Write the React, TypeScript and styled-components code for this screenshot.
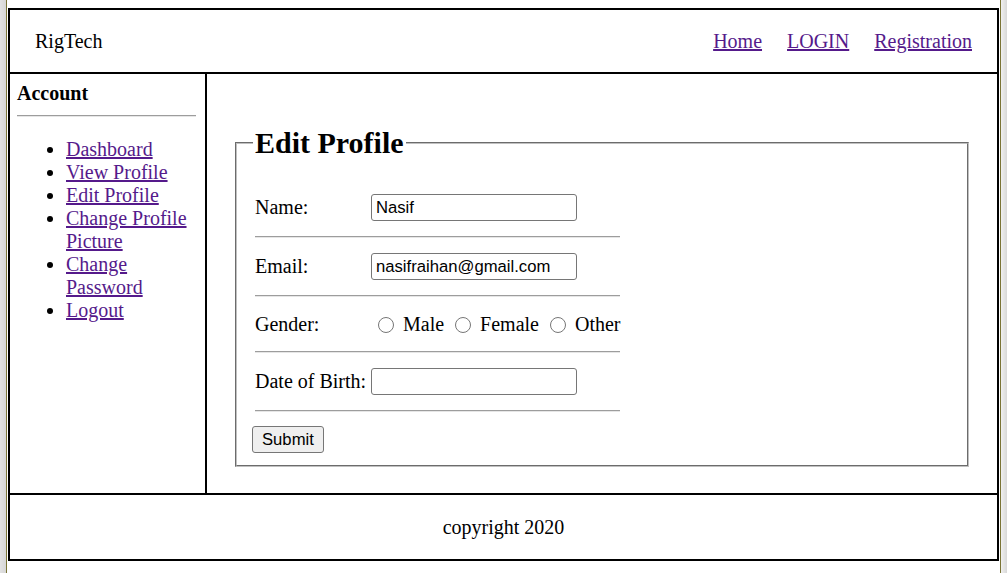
import styled, { createGlobalStyle } from 'styled-components';

const GlobalStyle = createGlobalStyle`
  html {
    min-height: 100%;
    background: linear-gradient(
      to right,
      #e2e2e2 0,
      #d6d6d6 6px,
      #7a7436 6px,
      #7a7436 7px,
      #ffffff 7px,
      #ffffff 1000px,
      #7a7436 1000px,
      #7a7436 1001px,
      #f0f0f0 1001px,
      #d8d8d8 100%
    );
  }
  body {
    margin: 8px;
    font-family: "Liberation Serif", "Times New Roman", serif;
    font-size: 20px;
    color: #000;
    background: transparent;
  }
`;

const Page = styled.div`
  border: 2px solid #000;
  background: #fff;
`;

const Header = styled.header`
  display: flex;
  align-items: center;
  justify-content: space-between;
  height: 62px;
  padding: 0 25px;
  border-bottom: 2px solid #000;
`;

const Brand = styled.div`
  font-size: 20px;
`;

const Nav = styled.nav`
  display: flex;
  gap: 25px;
`;

const Link = styled.a`
  color: #551a8b;
  text-decoration: underline;
  cursor: pointer;
`;

const Body = styled.div`
  display: flex;
`;

const Sidebar = styled.aside`
  width: 197px;
  box-sizing: border-box;
  padding: 0 9px 0 7px;
  border-right: 2px solid #000;
`;

const SideTitle = styled.h4`
  margin: 8px 0 0;
  font-size: 20px;
  font-weight: bold;
`;

const Rule = styled.hr<{ $top?: number; $bottom?: number }>`
  height: 0;
  margin: ${(p) => p.$top ?? 10}px 0 ${(p) => p.$bottom ?? 10}px;
  border: 0;
  border-top: 1px solid #9d9d9d;
  border-bottom: 1px solid #e6e6e6;
`;

const Menu = styled.ul`
  margin: 21px 0 0;
  padding-left: 49px;
  list-style: disc;
`;

const Main = styled.main`
  flex: 1;
  padding: 52px 28px 26px;
`;

const Fieldset = styled.fieldset`
  margin: 0;
  padding: 7px 15px 12px;
  border: 2px groove #c0c0c0;
`;

const Legend = styled.legend`
  margin-left: 1px;
  padding: 0 2px;
  font-size: 30px;
  font-weight: bold;
`;

const FormRows = styled.div`
  width: 365px;
  margin: 27px 0 0 3px;
`;

const Row = styled.div<{ $h?: number }>`
  display: flex;
  align-items: center;
  height: ${(p) => p.$h ?? 27}px;
`;

const Label = styled.label`
  width: 116px;
  flex: none;
  white-space: nowrap;
`;

const TextInput = styled.input`
  width: 206px;
  height: 27px;
  box-sizing: border-box;
  padding: 1px 4px;
  border: 1px solid #767676;
  border-radius: 3px;
  font-family: "Liberation Sans", Arial, sans-serif;
  font-size: 16.67px;
  color: #000;
  background: #fff;
`;

const Choice = styled.label`
  display: inline-flex;
  align-items: center;
  white-space: nowrap;
  margin-right: 4px;

  &:last-child {
    margin-right: 0;
  }
`;

const Radio = styled.input`
  width: 16px;
  height: 16px;
  margin: 1px 4px 0 7px;
  padding: 0;
  accent-color: #767676;
`;

const ChoiceText = styled.span`
  margin-left: 5px;
`;

const SubmitButton = styled.button`
  height: 27px;
  padding: 0 9px;
  margin-top: 14px;
  border: 1px solid #767676;
  border-radius: 3px;
  background: #efefef;
  font-family: "Liberation Sans", Arial, sans-serif;
  font-size: 16.67px;
  color: #000;
`;

const Footer = styled.footer`
  display: flex;
  align-items: center;
  justify-content: center;
  height: 64px;
  border-top: 2px solid #000;
`;

const menu = [
  'Dashboard',
  'View Profile',
  'Edit Profile',
  'Change Profile Picture',
  'Change Password',
  'Logout',
];

export default function App() {
  return (
    <>
      <GlobalStyle />
      <Page>
        <Header>
          <Brand>RigTech</Brand>
          <Nav>
            <Link>Home</Link>
            <Link>LOGIN</Link>
            <Link>Registration</Link>
          </Nav>
        </Header>
        <Body>
          <Sidebar>
            <SideTitle>Account</SideTitle>
            <Rule />
            <Menu>
              {menu.map((m) => (
                <li key={m}>
                  <Link>{m}</Link>
                </li>
              ))}
            </Menu>
          </Sidebar>
          <Main>
            <form onSubmit={(e) => e.preventDefault()}>
              <Fieldset>
                <Legend>Edit Profile</Legend>
                <FormRows>
                  <Row>
                    <Label>Name:</Label>
                    <TextInput defaultValue="Nasif" />
                  </Row>
                  <Rule $top={15} $bottom={15} />
                  <Row>
                    <Label>Email:</Label>
                    <TextInput defaultValue="nasifraihan@gmail.com" />
                  </Row>
                  <Rule $top={15} $bottom={15} />
                  <Row $h={25}>
                    <Label>Gender:</Label>
                    <Choice>
                      <Radio type="radio" name="gender" />
                      <ChoiceText>Male</ChoiceText>
                    </Choice>
                    <Choice>
                      <Radio type="radio" name="gender" />
                      <ChoiceText>Female</ChoiceText>
                    </Choice>
                    <Choice>
                      <Radio type="radio" name="gender" />
                      <ChoiceText>Other</ChoiceText>
                    </Choice>
                  </Row>
                  <Rule $top={14} $bottom={15} />
                  <Row>
                    <Label>Date of Birth:</Label>
                    <TextInput />
                  </Row>
                  <Rule $top={15} $bottom={0} />
                </FormRows>
                <SubmitButton type="submit">Submit</SubmitButton>
              </Fieldset>
            </form>
          </Main>
        </Body>
        <Footer>copyright 2020</Footer>
      </Page>
    </>
  );
}
